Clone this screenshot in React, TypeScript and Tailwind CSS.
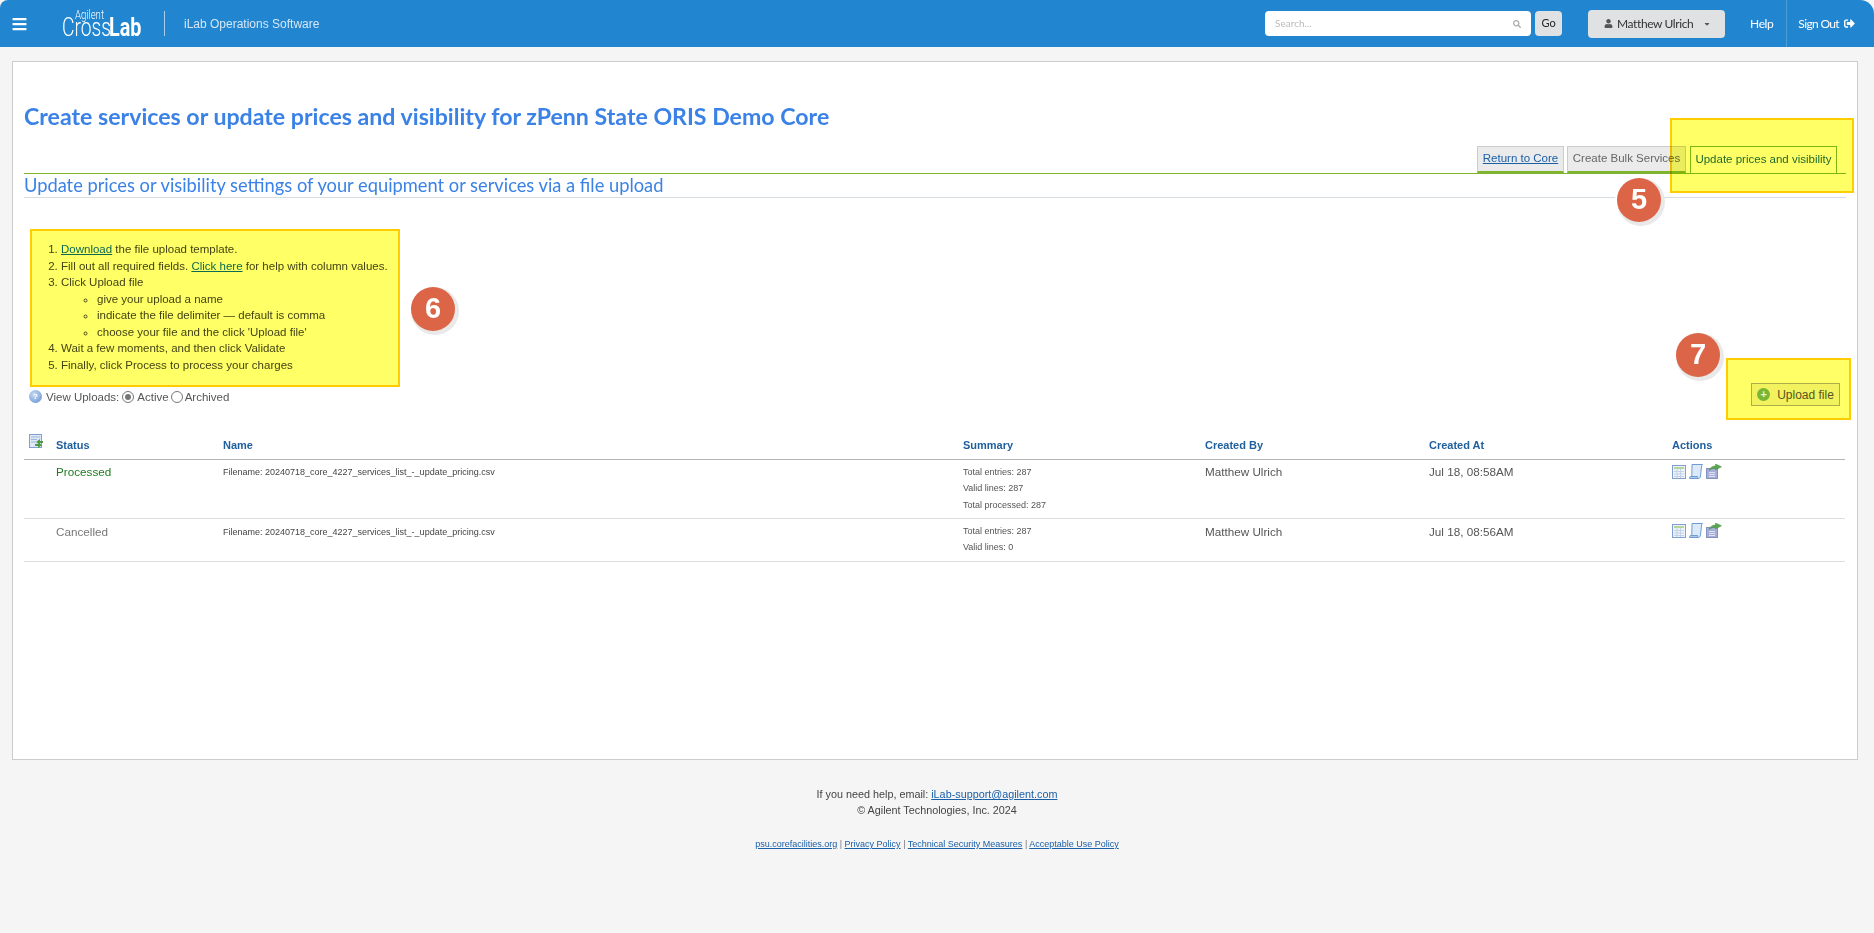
import { FaBars, FaCaretDown, FaSearch, FaSignOutAlt, FaUser } from "react-icons/fa";

const lato = "font-['Lato',sans-serif]";
const arial = "font-['Liberation_Sans',Arial,sans-serif]";

function Marker({ n, className }: { n: number; className: string }) {
  return (
    <div
      className={`absolute z-20 flex h-[44px] w-[44px] items-center justify-center rounded-full bg-[#db6546] text-[29px] font-bold text-white shadow-[2px_2px_0_2px_#e9e9e9,0_0_0_2px_#fff] ${arial} ${className}`}
    >
      {n}
    </div>
  );
}

function GridIcon() {
  return (
    <svg width="14" height="15" viewBox="0 0 14 15">
      <rect x="0.5" y="1.500" width="13" height="13" fill="#eef3fa" stroke="#7f9fd0" />
      <rect x="2" y="3" width="10" height="2" fill="#b5d59a" />
      <path d="M2 7.500h10M2 10h10M2 12.500h10M5 5v9M8.500 5v9" stroke="#c3d2e9" />
    </svg>
  );
}

function ScrollIcon() {
  return (
    <svg width="14" height="15" viewBox="0 0 14 15">
      <path d="M3 .5h10.500c-.8.6-1 1.500-1 2.500l-1 9c-.2 1.600-1 2.500-2.500 2.500H1.500c1-.6 1.300-1.500 1.300-2.500z" fill="#dce9f8" stroke="#6f9dd2" />
      <path d="M.6 14.500c-.4-.9 0-2 1.200-2h6.700c.2.900.1 1.500-.3 2z" fill="#a9c8ec" stroke="#6f9dd2" />
    </svg>
  );
}

function ExportIcon() {
  return (
    <svg width="16" height="15" viewBox="0 0 16 15">
      <rect x=".5" y="4.500" width="11" height="10" fill="#a5aed6" stroke="#8590c0" />
      <path d="M3 8.500h6M3 10.500h6M3 12.500h6" stroke="#dfe3f4" />
      <path d="M3 6.500C4 3.500 6.500 2 9.500 2V0l6 2.800-6 3.200V4.200C7 4.200 5 5 3 6.500z" fill="#5aa650" stroke="#4a8f42" strokeWidth=".5" />
    </svg>
  );
}

function ActionIcons() {
  return (
    <div className="flex items-start gap-[3px]">
      <GridIcon />
      <ScrollIcon />
      <ExportIcon />
    </div>
  );
}

function Header() {
  return (
    <header className="flex h-[47px] items-center rounded-tl-[8px] rounded-tr-[14px] bg-[#2185d0] text-white">
      <FaBars className="ml-[12px] h-[16px] w-[15px]" />
      <div className="relative ml-[35px] h-[47px] w-[82px] text-white">
        <span className="absolute left-[13px] top-[8px] origin-left scale-x-[.8] font-['Roboto',sans-serif] text-[12px] font-light leading-[14px]">
          Agilent
        </span>
        <span className="absolute left-0 top-[16px] origin-left scale-x-[.74] whitespace-nowrap font-['Roboto',sans-serif] text-[26px] font-light leading-[22px]">
          Cross
        </span>
        <span className="absolute left-[47px] top-[16px] origin-left scale-x-[.76] whitespace-nowrap font-['Roboto',sans-serif] text-[26px] font-bold leading-[22px]">
          Lab
        </span>
      </div>
      <div className="ml-[20px] h-[25px] w-px bg-[#a8cfee]" />
      <span className={`ml-[19px] text-[12px] text-[#d5e7f6] ${arial}`}>iLab Operations Software</span>

      <div className="ml-auto flex items-center">
        <div className={`flex h-[25px] w-[266px] items-center justify-between rounded-[4px] bg-white pl-[10px] pr-[10px] text-[10px] text-[#bbbbbb] ${lato}`}>
          <span>Search...</span>
          <FaSearch className="h-[8px] w-[8px] text-[#a9a9a9]" />
        </div>
        <div className={`ml-[4px] flex h-[25px] w-[27px] items-center justify-center rounded-[4px] bg-[#e0e1e2] text-[11px] text-[#222] ${lato}`}>
          Go
        </div>
        <div className={`ml-[26px] flex h-[28px] w-[137px] items-center gap-[4px] rounded-[4px] bg-[#e0e1e2] pl-[16px] text-[12px] tracking-[-.4px] text-[#333] ${lato}`}>
          <FaUser className="h-[9px] w-[9px] text-[#555]" />
          <span>Matthew Ulrich</span>
          <FaCaretDown className="ml-[6px] h-[8px] w-[8px] text-[#555]" />
        </div>
        <span className={`ml-[25px] text-[12px] tracking-[-.4px] ${lato}`}>Help</span>
        <div className="ml-[13px] h-[47px] w-px bg-[#4d9ddb]" />
        <span className={`ml-[11px] text-[12px] tracking-[-.65px] ${lato}`}>Sign Out</span>
        <FaSignOutAlt className="ml-[5px] mr-[19px] h-[11px] w-[11px]" />
      </div>
    </header>
  );
}

function Tabs() {
  return (
    <div className={`mt-[16px] flex items-end justify-end border-b border-[#7fb52e] pr-[9px] text-[11.500px] ${arial}`}>
      <a className="mr-[3px] flex h-[27px] w-[87px] items-center justify-center border border-b-[2px] border-[#cccccc] border-b-[#7fb52e] bg-[#ebebeb] text-[#1a5fa8] underline">
        Return to Core
      </a>
      <a className="mr-[4px] flex h-[27px] w-[119px] items-center justify-center border border-b-[2px] border-[#cccccc] border-b-[#7fb52e] bg-[#ebebeb] text-[#666666]">
        Create Bulk Services
      </a>
      <a className="flex h-[27px] w-[147px] items-center justify-center border border-b-0 border-[#7fb52e] bg-white text-[#1f6b6b]">
        Update prices and visibility
      </a>
    </div>
  );
}

function Instructions() {
  return (
    <div className={`ml-[6px] mt-[31px] h-[158px] w-[370px] border-2 border-[#ffcc00] bg-[#ffff66] pl-[18px] pt-[10px] text-[11.500px] leading-[16.500px] text-[#444416] ${arial}`}>
      <ol className="list-decimal pl-[11px]">
        <li>
          <a className="text-[#0b6a4f] underline">Download</a> the file upload template.
        </li>
        <li>
          Fill out all required fields. <a className="text-[#0b6a4f] underline">Click here</a> for help with column values.
        </li>
        <li>
          Click Upload file
          <ul className="list-[circle] pl-[36px]">
            <li>give your upload a name</li>
            <li>indicate the file delimiter — default is comma</li>
            <li>choose your file and the click 'Upload file'</li>
          </ul>
        </li>
        <li>Wait a few moments, and then click Validate</li>
        <li>Finally, click Process to process your charges</li>
      </ol>
    </div>
  );
}

function ViewUploads() {
  return (
    <div className={`ml-[5px] mt-[2px] flex h-[17px] items-center text-[11.500px] text-[#555555] ${arial}`}>
      <span className="-mt-[2px] flex h-[13px] w-[13px] items-center justify-center rounded-full bg-[radial-gradient(circle_at_40%_35%,#c9dcf3,#5c8ccb)] text-[8px] font-bold text-white">
        ?
      </span>
      <span className="ml-[4px]">View Uploads:</span>
      <span className="-mt-[2px] ml-[3px] flex h-[12px] w-[12px] items-center justify-center rounded-full border border-[#767676] bg-white">
        <span className="h-[6px] w-[6px] rounded-full bg-[#767676]" />
      </span>
      <span className="ml-[3px]">Active</span>
      <span className="-mt-[2px] ml-[2px] h-[12px] w-[12px] rounded-full border border-[#767676] bg-white" />
      <span className="ml-[2px]">Archived</span>
    </div>
  );
}

const rows = [
  {
    status: "Processed",
    tone: "text-[#1f7a1f]",
    lines: ["Total entries: 287", "Valid lines: 287", "Total processed: 287"],
    at: "Jul 18, 08:58AM",
    height: "h-[59px]",
    pad: "pt-[5px]",
  },
  {
    status: "Cancelled",
    tone: "text-[#777777]",
    lines: ["Total entries: 287", "Valid lines: 0"],
    at: "Jul 18, 08:56AM",
    height: "h-[43px]",
    pad: "pt-[6px]",
  },
];

function UploadsTable() {
  return (
    <table className={`mt-[24px] w-[1821px] table-fixed border-collapse text-left ${arial}`}>
      <thead>
        <tr className="h-[29px] border-b border-[#b5b5b5] text-[11px] font-bold text-[#1f5f9e]">
          <th className="w-[32px] pl-[5px] align-middle">
            <svg width="15" height="16" viewBox="0 0 15 16" className="-mt-[4px]">
              <rect x=".5" y=".5" width="12" height="13" fill="#dfe9f6" stroke="#7f9fd0" />
              <path d="M2 3h9M2 5.500h6M2 8h5" stroke="#9db7dc" />
              <path d="M7 8l4-3v2h3v2h-3v2zM13 11l-4 3v-2H6v-2h3V8z" fill="#4f9a45" />
            </svg>
          </th>
          <th className="w-[167px] pt-[1px]">Status</th>
          <th className="w-[740px] pt-[1px]">Name</th>
          <th className="w-[242px] pt-[1px]">Summary</th>
          <th className="w-[224px] pt-[1px]">Created By</th>
          <th className="w-[243px] pt-[1px]">Created At</th>
          <th className="pt-[1px]">Actions</th>
        </tr>
      </thead>
      <tbody>
        {rows.map((row) => (
          <tr key={row.status} className={`${row.height} border-b border-[#dddddd] align-top text-[11.700px] leading-[14px] text-[#555555]`}>
            <td />
            <td className={`${row.pad} ${row.tone}`}>{row.status}</td>
            <td className={`${row.pad} text-[9px] leading-[14px] text-[#444444]`}>
              Filename: 20240718_core_4227_services_list_-_update_pricing.csv
            </td>
            <td className="pt-[4px] text-[9px] leading-[16.500px] text-[#555555]">
              {row.lines.map((line) => (
                <div key={line}>{line}</div>
              ))}
            </td>
            <td className={row.pad}>Matthew Ulrich</td>
            <td className={row.pad}>{row.at}</td>
            <td className="pt-[4px]">
              <ActionIcons />
            </td>
          </tr>
        ))}
      </tbody>
    </table>
  );
}

function Footer() {
  return (
    <footer className={`pt-[26px] text-center text-[10.800px] leading-[16px] text-[#444444] ${arial}`}>
      <div>
        If you need help, email: <a className="text-[#1a5fa8] underline">iLab-support@agilent.com</a>
      </div>
      <div>© Agilent Technologies, Inc. 2024</div>
      <div className="mt-[19px] text-[9px] leading-[14px] text-[#777777]">
        <a className="text-[#1a5fa8] underline">psu.corefacilities.org</a> | <a className="text-[#1a5fa8] underline">Privacy Policy</a> |{" "}
        <a className="text-[#1a5fa8] underline">Technical Security Measures</a> | <a className="text-[#1a5fa8] underline">Acceptable Use Policy</a>
      </div>
    </footer>
  );
}

export default function App() {
  return (
    <div className="h-[933px] w-[1874px] overflow-hidden bg-[#f5f5f5]">
      <Header />
      <main className="relative ml-[12px] mr-[16px] mt-[14px] h-[699px] border border-[#cccccc] bg-white px-[11px] pt-[40px]">
        <h1 className={`text-[23.150px] font-bold leading-[28px] text-[#3b82e6] ${lato}`}>
          Create services or update prices and visibility for zPenn State ORIS Demo Core
        </h1>
        <Tabs />
        <h2 className={`h-[24px] border-b border-[#d8dde3] text-[18.300px] leading-[23px] text-[#3b82e6] ${lato}`}>
          Update prices or visibility settings of your equipment or services via a file upload
        </h2>
        <Instructions />
        <ViewUploads />
        <UploadsTable />

        <div className="pointer-events-none absolute left-[1657px] top-[56px] h-[75px] w-[184px] border-2 border-[#ffcc00] bg-[#ffff66] mix-blend-multiply" />
        <Marker n={5} className="left-[1604px] top-[116px]" />
        <Marker n={6} className="left-[398px] top-[225px]" />
        <Marker n={7} className="left-[1663px] top-[271px]" />
        <div className="absolute left-[1713px] top-[296px] z-10 flex h-[62px] w-[125px] items-end justify-end border-2 border-[#ffcc00] bg-[#ffff66] pb-[12px] pr-[9px]">
          <a className={`flex h-[23px] w-[89px] items-center justify-center gap-[7px] border border-[#adad4a] bg-[#f2f25e] text-[12px] text-[#555522] ${arial}`}>
            <span className="flex h-[13px] w-[13px] items-center justify-center rounded-full bg-[#7ab535] text-[11px] font-bold leading-none text-[#e6f5c8]">+</span>
            Upload file
          </a>
        </div>
      </main>
      <Footer />
    </div>
  );
}
